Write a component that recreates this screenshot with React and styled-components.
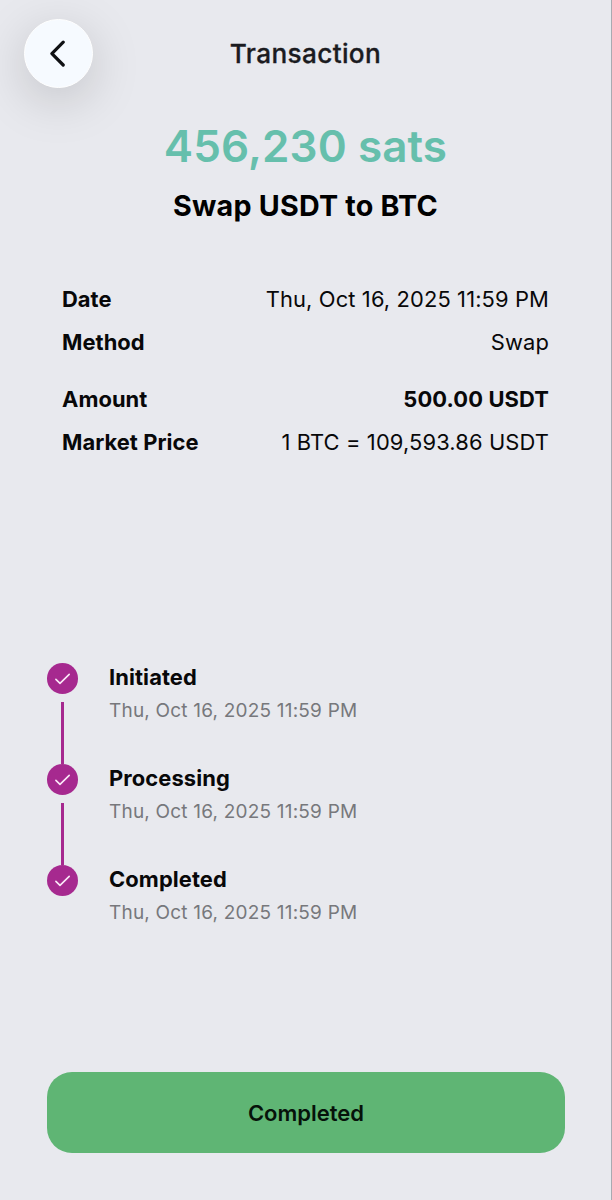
import styled, { createGlobalStyle } from "styled-components";

const DATE = "Thu, Oct 16, 2025 11:59 PM";

const details = [
    { label: "Date", value: DATE },
    { label: "Method", value: "Swap" },
    { label: "Amount", value: "500.00 USDT", strong: true, spaced: true },
    { label: "Market Price", value: "1 BTC = 109,593.86 USDT" },
];

const steps = ["Initiated", "Processing", "Completed"];

const App = () => {
    return (
        <>
            <GlobalStyle />
            <StyledScreen>
                <StyledHeader>
                    <BackButton aria-label="Back">
                        <svg width="18" height="28" viewBox="0 0 18 28" fill="none" stroke="#101114" strokeWidth="3.2" strokeLinecap="round" strokeLinejoin="round">
                            <path d="M13.2 2.2 L1.9 13.6 L13.2 25" />
                        </svg>
                    </BackButton>
                    <h1>Transaction</h1>
                </StyledHeader>
                <StyledSummary>
                    <p>456,230 sats</p>
                    <h2>Swap USDT to BTC</h2>
                </StyledSummary>
                <StyledDetails>
                    {details.map(({ label, value, strong, spaced }) => (
                        <DetailRow key={label} $strong={strong} $spaced={spaced}>
                            <dt>{label}</dt>
                            <dd>{value}</dd>
                        </DetailRow>
                    ))}
                </StyledDetails>
                <StyledTimeline>
                    {steps.map((step, i) => (
                        <StyledStep key={step}>
                            <StepTrack>
                                <StepDot>
                                    <svg width="19" height="19" viewBox="0 0 19 19" fill="none" stroke="#fae9f7" strokeWidth="1.6" strokeLinecap="round" strokeLinejoin="round">
                                        <path d="M2.9 10.4 L7 14.4 L16.2 5.4" />
                                    </svg>
                                </StepDot>
                                {i < steps.length - 1 && <StepLine />}
                            </StepTrack>
                            <StepText>
                                <h3>{step}</h3>
                                <p>{DATE}</p>
                            </StepText>
                        </StyledStep>
                    ))}
                </StyledTimeline>
                <StatusButton>Completed</StatusButton>
            </StyledScreen>
        </>
    );
};

const GlobalStyle = createGlobalStyle`
    * {
        box-sizing: border-box;
        margin: 0;
        padding: 0;
    }

    body {
        background: #e8e9ee;
        font-family: Inter, sans-serif;
        color: #080809;
    }
`;

const StyledScreen = styled.main`
    display: flex;
    flex-direction: column;
    width: 612px;
    height: 1200px;
    overflow: hidden;
    border-right: 1px solid #a9aab1;
`;

const StyledHeader = styled.header`
    display: grid;
    grid-template-columns: 69px 1fr 69px;
    align-items: center;
    padding: 19px 24px 0;

    h1 {
        font-size: 26.2px;
        font-weight: 500;
        line-height: 32px;
        letter-spacing: 0.35px;
        text-align: center;
        white-space: nowrap;
        color: #1b1b1f;
        -webkit-text-stroke: 0.3px #1b1b1f;
    }
`;

const BackButton = styled.button`
    display: flex;
    align-items: center;
    justify-content: center;
    width: 69px;
    height: 69px;
    margin-left: 0.4px;
    border: 1px solid #fff;
    border-radius: 50%;
    background: #f6faff;
    box-shadow: 0 12px 50px rgba(0, 0, 0, 0.17);
`;

const StyledSummary = styled.section`
    height: 190px;
    padding-top: 30px;
    text-align: center;

    p {
        font-size: 44px;
        font-weight: 600;
        line-height: 57px;
        letter-spacing: 0.1px;
        color: #66bfac;
    }

    h2 {
        margin-top: 13px;
        font-size: 28.7px;
        font-weight: 700;
        line-height: 36px;
        letter-spacing: 0.2px;
        color: #000;
    }
`;

const StyledDetails = styled.dl`
    height: 385px;
    padding: 0 62px;
`;

const DetailRow = styled.div`
    display: flex;
    align-items: center;
    justify-content: space-between;
    height: 42.6px;
    margin-top: ${({ $spaced }) => ($spaced ? "15px" : "0")};
    font-size: 21.9px;

    dt {
        font-weight: 700;
        letter-spacing: 0.05px;
    }

    dd {
        font-weight: ${({ $strong }) => ($strong ? 700 : 400)};
        letter-spacing: 0.12px;
        font-feature-settings: "calt" 0;
    }
`;

const StyledTimeline = styled.ol`
    height: 409px;
    padding-left: 46px;
    list-style: none;
`;

const StyledStep = styled.li`
    display: flex;
    gap: 31px;
    height: 101px;
`;

const StepTrack = styled.div`
    display: flex;
    flex-direction: column;
    align-items: center;
    width: 32px;
`;

const StepDot = styled.span`
    display: flex;
    align-items: center;
    justify-content: center;
    width: 31px;
    height: 31px;
    border-radius: 50%;
    background: #a6298f;
`;

const StepLine = styled.span`
    width: 3px;
    height: 63px;
    margin-top: 8px;
    background: #a6298f;
`;

const StepText = styled.div`
    h3 {
        font-size: 21.9px;
        font-weight: 700;
        line-height: 28px;
        letter-spacing: 0.1px;
    }

    p {
        margin-top: 6px;
        font-size: 19px;
        line-height: 27px;
        letter-spacing: 0.2px;
        color: #77787c;
    }
`;

const StatusButton = styled.button`
    width: 518px;
    height: 81px;
    margin-left: 47px;
    border: none;
    border-radius: 25px;
    background: #5fb574;
    font-family: inherit;
    font-size: 22px;
    font-weight: 600;
    color: #06120a;
`;

export default App;
